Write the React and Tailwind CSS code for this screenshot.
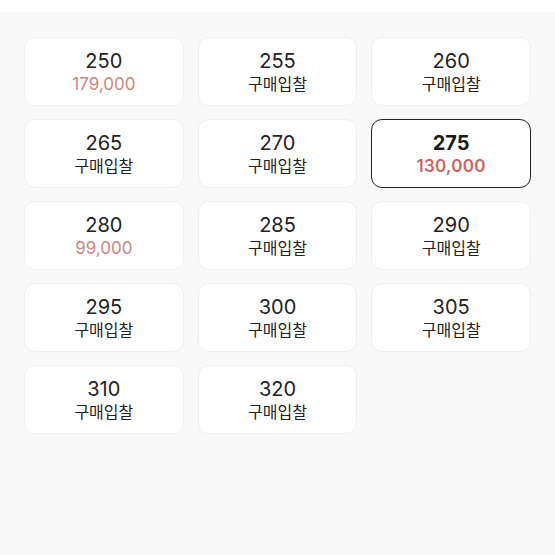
import React from 'react'

const SIZES = [
  { size: '250', price: '179,000' },
  { size: '255' },
  { size: '260' },
  { size: '265' },
  { size: '270' },
  { size: '275', price: '130,000', selected: true },
  { size: '280', price: '99,000' },
  { size: '285' },
  { size: '290' },
  { size: '295' },
  { size: '300' },
  { size: '305' },
  { size: '310' },
  { size: '320' },
]

const SizeCard = ({ size, price, selected }) => (
  <button
    className={
      selected
        ? 'h-[69px] rounded-[11px] bg-white border-[1.5px] border-[#222222] flex flex-col items-center justify-center'
        : 'h-[69px] rounded-[11px] bg-white border border-[#efefef] flex flex-col items-center justify-center'
    }
  >
    <span
      className={
        selected
          ? 'text-[20px] leading-[24px] font-bold text-[#1a1a1a]'
          : 'text-[20px] leading-[24px] text-[#222222]'
      }
    >
      {size}
    </span>
    {price ? (
      <span
        className={
          selected
            ? 'text-[17px] leading-[22px] font-semibold text-[#c8675f] tracking-[0.3px]'
            : 'text-[17px] leading-[22px] text-[#cc8680]'
        }
      >
        {price}
      </span>
    ) : (
      <span className="text-[16px] leading-[22px] text-[#222222]">구매입찰</span>
    )}
  </button>
)

export default function App() {
  return (
    <div
      className="w-[555px] h-[555px] bg-white"
      style={{ fontFamily: 'Inter, "Noto Sans CJK KR", sans-serif' }}
    >
      <div className="h-[12px] bg-white" />
      <div className="h-[543px] bg-[#f9f9f9] px-[24px] pt-[25px]">
        <div className="grid grid-cols-3 gap-x-[14px] gap-y-[13px]">
          {SIZES.map((s) => (
            <SizeCard key={s.size} {...s} />
          ))}
        </div>
      </div>
    </div>
  )
}
